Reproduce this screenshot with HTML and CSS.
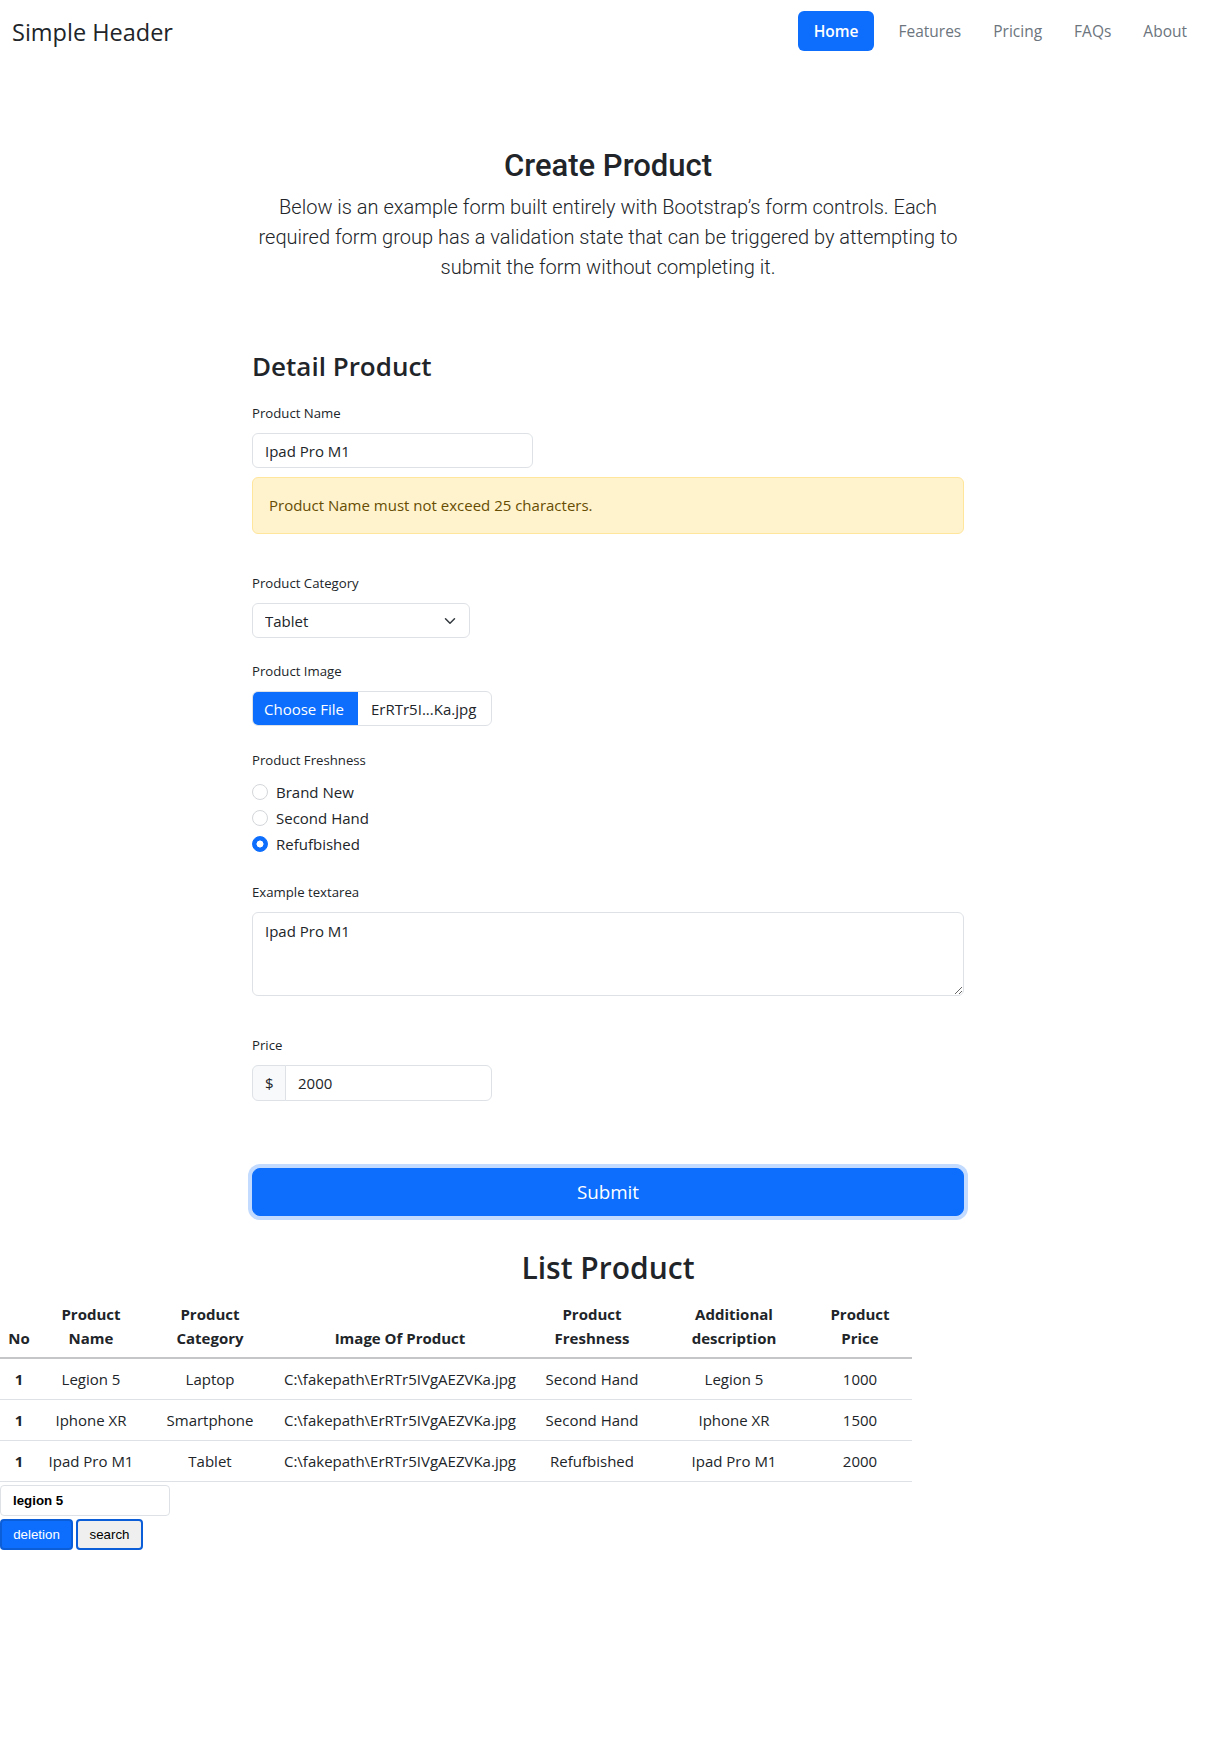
FILE: index.html
```html
<!DOCTYPE html>
<html lang="en">
<head>
<meta charset="utf-8">
<title>Create Product</title>
<link rel="stylesheet" href="styles.css">
</head>
<body>
<header class="site-header">
  <a class="brand" href="#">Simple Header</a>
  <ul class="nav">
    <li class="nav-item nav-item-first"><a class="nav-link active" href="#">Home</a></li>
    <li class="nav-item"><a class="nav-link" href="#">Features</a></li>
    <li class="nav-item"><a class="nav-link" href="#">Pricing</a></li>
    <li class="nav-item"><a class="nav-link" href="#">FAQs</a></li>
    <li class="nav-item"><a class="nav-link" href="#">About</a></li>
  </ul>
</header>

<section class="hero">
  <h2 class="hero-title">Create Product</h2>
  <p class="lead">Below is an example form built entirely with Bootstrap’s form controls. Each required form group has a validation state that can be triggered by attempting to submit the form without completing it.</p>
</section>

<main class="form-wrap">
  <h3 class="section-title">Detail Product</h3>
  <form class="product-form">
    <div class="group group-name">
      <label class="form-label" for="pname">Product Name</label>
      <input class="form-control name-input" id="pname" type="text" value="Ipad Pro M1">
      <div class="alert">Product Name must not exceed 25 characters.</div>
    </div>

    <div class="group group-category">
      <label class="form-label" for="pcat">Product Category</label>
      <div class="select-wrap">
        <select class="form-select" id="pcat">
          <option>Tablet</option>
          <option>Laptop</option>
          <option>Smartphone</option>
        </select>
        <svg class="select-chevron" width="16" height="12" viewBox="0 0 16 16" aria-hidden="true"><path d="m2 5 6 6 6-6" fill="none" stroke="#343a40" stroke-width="2" stroke-linecap="round" stroke-linejoin="round"/></svg>
      </div>
    </div>

    <div class="group group-image">
      <span class="form-label">Product Image</span>
      <div class="file-input">
        <span class="file-btn">Choose File</span>
        <span class="file-name">ErRTr5I...Ka.jpg</span>
      </div>
    </div>

    <div class="group group-fresh">
      <span class="form-label">Product Freshness</span>
      <div class="form-check">
        <input class="radio" type="radio" name="fresh" id="f1">
        <label for="f1">Brand New</label>
      </div>
      <div class="form-check">
        <input class="radio" type="radio" name="fresh" id="f2">
        <label for="f2">Second Hand</label>
      </div>
      <div class="form-check">
        <input class="radio" type="radio" name="fresh" id="f3" checked>
        <label for="f3">Refufbished</label>
      </div>
    </div>

    <div class="group group-text">
      <label class="form-label" for="ptext">Example textarea</label>
      <textarea class="form-textarea" id="ptext" spellcheck="true">Ipad Pro M1</textarea>
    </div>

    <div class="group group-price">
      <label class="form-label" for="pprice">Price</label>
      <div class="input-group">
        <span class="input-addon">$</span>
        <input class="price-input" id="pprice" type="text" value="2000">
      </div>
    </div>

    <button class="submit-btn" type="button">Submit</button>
  </form>
</main>

<h2 class="list-title">List Product</h2>

<table class="product-table">
  <colgroup>
    <col class="c-no"><col class="c-name"><col class="c-cat"><col class="c-img"><col class="c-fresh"><col class="c-desc"><col class="c-price">
  </colgroup>
  <thead>
    <tr>
      <th>No</th>
      <th>Product Name</th>
      <th>Product Category</th>
      <th>Image Of Product</th>
      <th>Product Freshness</th>
      <th>Additional description</th>
      <th>Product Price</th>
    </tr>
  </thead>
  <tbody>
    <tr>
      <th>1</th><td>Legion 5</td><td>Laptop</td><td>C:\fakepath\ErRTr5IVgAEZVKa.jpg</td><td>Second Hand</td><td>Legion 5</td><td>1000</td>
    </tr>
    <tr>
      <th>1</th><td>Iphone XR</td><td>Smartphone</td><td>C:\fakepath\ErRTr5IVgAEZVKa.jpg</td><td>Second Hand</td><td>Iphone XR</td><td>1500</td>
    </tr>
    <tr>
      <th>1</th><td>Ipad Pro M1</td><td>Tablet</td><td>C:\fakepath\ErRTr5IVgAEZVKa.jpg</td><td>Refufbished</td><td>Ipad Pro M1</td><td>2000</td>
    </tr>
  </tbody>
</table>

<div class="table-tools">
  <input class="search-input" type="text" value="legion 5">
  <div class="tool-buttons">
    <button class="btn-delete" type="button">deletion</button>
    <button class="btn-search" type="button">search</button>
  </div>
</div>
</body>
</html>
```

FILE: styles.css
```css
* {
  box-sizing: border-box;
}

body {
  margin: 0;
  font-family: "Open Sans", "Noto Sans", sans-serif;
  font-size: 15px;
  line-height: 24px;
  color: #212529;
  background: #fff;
}

/* Header */
.site-header {
  display: flex;
  align-items: center;
  justify-content: space-between;
  padding: 11px 13px 0 12px;
  height: 51px;
}

.brand {
  padding-top: 2px;
  font-size: 23.5px;
  line-height: 29px;
  color: #212529;
  text-decoration: none;
}

.nav {
  display: flex;
  list-style: none;
  margin: 0;
  padding: 0;
}

.nav-item-first {
  margin-right: 8px;
}

.nav-link {
  display: block;
  padding: 8px 16px;
  line-height: 24px;
  font-size: 15.5px;
  color: #6c757d;
  text-decoration: none;
  border-radius: 6px;
}

.nav-link.active {
  background: #0d6efd;
  color: #fff;
  font-weight: 600;
}

/* Hero */
.hero {
  padding-top: 96px;
  text-align: center;
  font-family: Roboto, "Open Sans", sans-serif;
}

.hero-title {
  margin: 0 0 7px;
  font-size: 31px;
  line-height: 38px;
  font-weight: 500;
}

.lead {
  width: 712px;
  margin: 0 auto;
  font-size: 20px;
  line-height: 30px;
  font-weight: 300;
}

/* Form */
.form-wrap {
  width: 712px;
  margin: 67px auto 0;
}

.section-title {
  margin: 0 0 20px;
  font-size: 26px;
  line-height: 34px;
  font-weight: 600;
}

.form-label {
  display: block;
  font-size: 13.2px;
  line-height: 21px;
  margin-bottom: 9px;
}

.group-name { margin-bottom: 39px; }
.group-category { margin-bottom: 23px; }
.group-image { margin-bottom: 24px; }
.group-fresh { margin-bottom: 26px; }
.group-text { margin-bottom: 39px; }
.group-price { margin-bottom: 67px; }

.form-control,
.form-select,
.price-input,
.form-textarea {
  font-family: inherit;
  font-size: 15px;
  color: #212529;
  background: #fff;
  border: 1px solid #dee2e6;
  border-radius: 6px;
  outline: none;
}

.name-input {
  display: block;
  width: 281px;
  height: 35px;
  padding: 0 12px;
}

.alert {
  margin-top: 9px;
  height: 57px;
  padding: 16px;
  background: #fff3cd;
  border: 1px solid #ffe69c;
  border-radius: 6px;
  color: #664d03;
  line-height: 23px;
}

.select-wrap {
  position: relative;
  width: 218px;
}

.form-select {
  display: block;
  width: 218px;
  height: 35px;
  padding: 0 36px 0 12px;
  appearance: none;
  -webkit-appearance: none;
}

.select-chevron {
  position: absolute;
  right: 12px;
  top: 12px;
  pointer-events: none;
}

.file-input {
  display: flex;
  align-items: stretch;
  width: 240px;
  height: 35px;
  border: 1px solid #dee2e6;
  border-radius: 6px;
  overflow: hidden;
}

.file-btn {
  display: flex;
  align-items: center;
  width: 105px;
  padding-left: 11px;
  background: #0d6efd;
  color: #fff;
}

.file-name {
  display: flex;
  align-items: center;
  padding-left: 13px;
}

.form-check {
  display: flex;
  align-items: center;
  gap: 8px;
  height: 24px;
  margin-bottom: 2px;
}

.form-check label {
  font-size: 15px;
}

.radio {
  appearance: none;
  -webkit-appearance: none;
  width: 16px;
  height: 16px;
  margin: 0;
  border: 1px solid #d3d6d9;
  border-radius: 50%;
  background: #fff;
}

.radio:checked {
  border-color: #0d6efd;
  background: radial-gradient(circle, #fff 0 3.2px, #0d6efd 3.8px);
}

.form-textarea {
  display: block;
  width: 712px;
  height: 84px;
  padding: 6px 12px;
  line-height: 24px;
  resize: vertical;
}

.input-group {
  display: flex;
  width: 240px;
  height: 36px;
}

.input-addon {
  display: flex;
  align-items: center;
  width: 34px;
  padding-left: 12px;
  background: #f8f9fa;
  border: 1px solid #dee2e6;
  border-radius: 6px 0 0 6px;
}

.price-input {
  flex: 1;
  min-width: 0;
  margin-left: -1px;
  padding: 0 12px;
  border-radius: 0 6px 6px 0;
}

.submit-btn {
  display: block;
  width: 712px;
  height: 48px;
  margin: 0;
  padding: 0;
  border: 1px solid #0d6efd;
  border-radius: 8px;
  background: #0d6efd;
  color: #fff;
  font-family: inherit;
  font-size: 18.8px;
  box-shadow: 0 0 0 4px rgba(13, 110, 253, 0.25);
}

/* List */
.list-title {
  margin: 33px 0 5px;
  text-align: center;
  font-size: 30px;
  line-height: 38px;
  font-weight: 600;
}

.product-table {
  width: 912px;
  table-layout: fixed;
  border-collapse: collapse;
}

.c-no { width: 38px; }
.c-name { width: 106px; }
.c-cat { width: 132px; }
.c-img { width: 248px; }
.c-fresh { width: 136px; }
.c-desc { width: 148px; }
.c-price { width: 104px; }

.product-table th,
.product-table td {
  padding: 8px;
  text-align: center;
  border-bottom: 1px solid #dee2e6;
}

.product-table thead th {
  padding: 10px 8px 7px;
  vertical-align: bottom;
  font-weight: 700;
  border-bottom: 2px solid #c4c6c8;
}

.product-table tbody td,
.product-table tbody th {
  white-space: nowrap;
  padding: 8px 0;
}

.product-table tbody th {
  font-weight: 700;
}

.table-tools {
  padding-top: 3px;
}

.search-input {
  display: block;
  width: 170px;
  height: 31px;
  padding: 0 12px;
  border: 1px solid #dee2e6;
  border-radius: 4px;
  font-family: "Liberation Sans", Arial, sans-serif;
  font-size: 13.3px;
  font-weight: 700;
  color: #000;
}

.tool-buttons {
  display: flex;
  gap: 3px;
  margin-top: 3px;
}

.btn-delete,
.btn-search {
  height: 31px;
  padding: 0;
  border-radius: 4px;
  font-family: "Liberation Sans", Arial, sans-serif;
  font-size: 13.3px;
}

.btn-delete {
  width: 73px;
  background: #0d6efd;
  color: #fff;
  border: 2px solid #0b5ed7;
}

.btn-search {
  width: 67px;
  background: #efefef;
  color: #000;
  border: 2px solid #0b5ed7;
}
```
